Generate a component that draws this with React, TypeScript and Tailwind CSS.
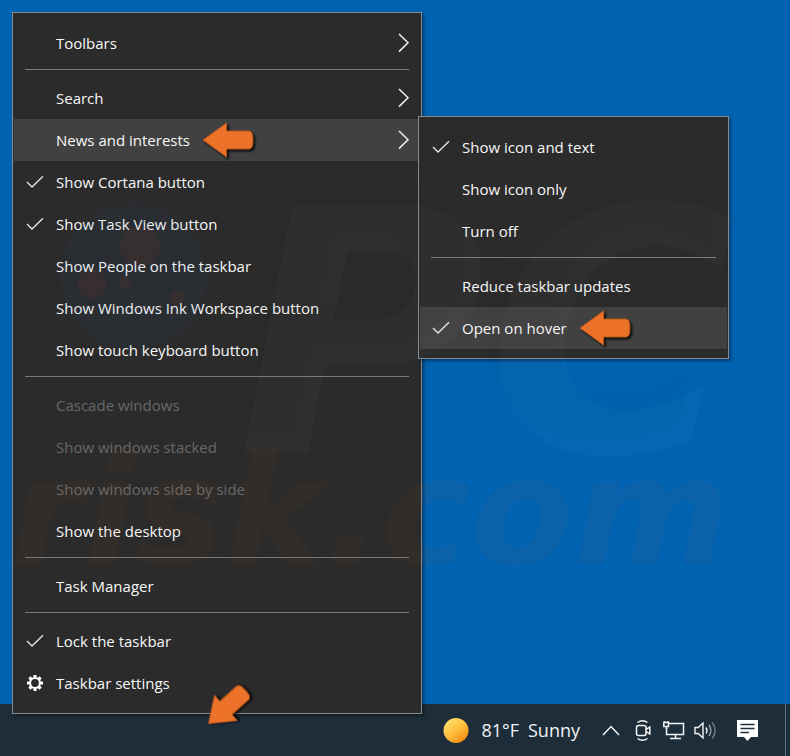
import React, { useState } from "react";

type Item = {
  id: string;
  label?: string;
  checked?: boolean;
  disabled?: boolean;
  gear?: boolean;
  more?: boolean;
  arrow?: boolean;
};

// An entry without a label is drawn as a separator
const taskbarItems: Item[] = [
  { id: "toolbars", label: "Toolbars", more: true },
  { id: "sep-1" },
  { id: "search", label: "Search", more: true },
  { id: "news", label: "News and interests", more: true, arrow: true },
  { id: "cortana", label: "Show Cortana button", checked: true },
  { id: "taskview", label: "Show Task View button", checked: true },
  { id: "people", label: "Show People on the taskbar" },
  { id: "ink", label: "Show Windows Ink Workspace button" },
  { id: "touch", label: "Show touch keyboard button" },
  { id: "sep-2" },
  { id: "cascade", label: "Cascade windows", disabled: true },
  { id: "stacked", label: "Show windows stacked", disabled: true },
  { id: "side", label: "Show windows side by side", disabled: true },
  { id: "desktop", label: "Show the desktop" },
  { id: "sep-3" },
  { id: "manager", label: "Task Manager" },
  { id: "sep-4" },
  { id: "lock", label: "Lock the taskbar", checked: true },
  { id: "settings", label: "Taskbar settings", gear: true },
];

const newsItems: Item[] = [
  { id: "icon-text", label: "Show icon and text", checked: true },
  { id: "icon-only", label: "Show icon only" },
  { id: "off", label: "Turn off" },
  { id: "sep" },
  { id: "updates", label: "Reduce taskbar updates" },
  { id: "hover", label: "Open on hover", checked: true, arrow: true },
];

const Check = () => (
  <svg width="18" height="14" viewBox="0 0 18 14" fill="none" aria-hidden="true">
    <path d="M1 7 6 12 17 1.2" stroke="#e8e8e8" strokeWidth="1.3" />
  </svg>
);

const Gear = () => (
  <svg width="18" height="18" viewBox="-9 -9 18 18" aria-hidden="true">
    <g fill="#fff">
      {[0, 45, 90, 135].map((deg) => (
        <rect key={deg} x="-1.6" y="-8" width="3.2" height="16" rx="0.4" transform={`rotate(${deg})`} />
      ))}
      <circle r="6" />
    </g>
    <circle r="3.9" fill="#2b2b2b" />
  </svg>
);

const Chevron = () => (
  <svg width="12" height="20" viewBox="0 0 12 20" fill="none" aria-hidden="true">
    <path d="M1 1 10 9.8 1 18.6" stroke="#f0f0f0" strokeWidth="1.5" />
  </svg>
);

const Arrow = ({ className = "" }: { className?: string }) => (
  <svg
    className={`shrink-0 drop-shadow-[2px_2px_1px_rgba(0,0,0,0.75)] ${className}`}
    width="52"
    height="36"
    viewBox="0 0 52 36"
    aria-hidden="true"
  >
    <path
      d="M1 18 24.5 1V9H47Q51 9 51 18T47 27H24.5V35Z"
      fill="#ec7229"
      stroke="#b9541b"
      strokeWidth="1"
      strokeLinejoin="round"
    />
  </svg>
);

const Menu = ({
  items,
  active,
  onActive,
  label,
  submenu,
  children,
  className,
}: {
  items: Item[];
  active: string;
  onActive: (id: string) => void;
  label: string;
  submenu?: React.ReactNode;
  children?: React.ReactNode;
  className: string;
}) => (
  <div
    className={`border border-[#858b90] bg-[#2b2b2b] py-[9px] shadow-[2px_2px_3px_rgba(0,0,0,0.4)] ${className}`}
  >
    <ul role="menu" aria-label={label}>
      {items.map((item) =>
        item.label ? (
          <li key={item.id} role="none" className="relative px-px">
            <button
              type="button"
              role={item.checked ? "menuitemcheckbox" : "menuitem"}
              aria-checked={item.checked}
              aria-haspopup={item.more ? "menu" : undefined}
              disabled={item.disabled}
              onMouseEnter={() => onActive(item.id)}
              className={`flex h-[42px] w-full items-center text-left ${
                item.disabled ? "text-[#686868]" : "text-[#f7f7f7]"
              } ${active === item.id ? "bg-[#414141]" : ""}`}
            >
              <span className="flex w-[42px] shrink-0 justify-center">
                {item.checked && <Check />}
                {item.gear && <Gear />}
              </span>
              <span className="whitespace-nowrap">{item.label}</span>
              {item.arrow && <Arrow className="ml-3" />}
              {item.more && (
                <span className="mr-[10px] ml-auto">
                  <Chevron />
                </span>
              )}
            </button>
            {item.id === "news" && submenu}
          </li>
        ) : (
          <li key={item.id} role="separator" className="mx-3 mt-[5px] mb-[7px] h-px bg-[#7a7a7a]" />
        )
      )}
    </ul>
    {children}
  </div>
);

const Watermark = () => (
  <div
    aria-hidden="true"
    className="pointer-events-none absolute inset-0 z-20 overflow-hidden font-['DejaVu_Sans',sans-serif] font-bold italic select-none"
  >
    <svg className="absolute top-[200px] left-[56px]" width="154" height="154" viewBox="0 0 154 154">
      <circle cx="77" cy="77" r="73" fill="#2a6ba8" opacity="0.06" />
      <g fill="#d03a1e" opacity="0.08">
        <circle cx="84" cy="46" r="20" />
        <circle cx="36" cy="84" r="14" />
        <circle cx="69" cy="82" r="6" />
        <circle cx="121" cy="98" r="7" />
      </g>
    </svg>
    <span className="absolute top-[116px] left-[225px] text-[340px] leading-[400px] whitespace-nowrap text-black/2 [text-shadow:12px_18px_0_rgba(255,255,255,0.02)]">
      PC
    </span>
    <span className="absolute top-[422px] left-[10px] text-[150px] leading-[180px] whitespace-nowrap text-[#e0641c]/5">
      risk.com
    </span>
  </div>
);

const TrayButton = ({ label, children }: { label: string; children: React.ReactNode }) => (
  <button type="button" aria-label={label} className="flex h-full items-center">
    {children}
  </button>
);

const Taskbar = () => (
  <footer className="flex h-[52px] items-center justify-end bg-[#1d2d39] text-[#f2f4f5]">
    <button type="button" className="flex h-full items-center text-lg">
      <svg width="26" height="26" viewBox="0 0 26 26" aria-hidden="true">
        <defs>
          <linearGradient id="sun" x1="0.2" y1="0.1" x2="0.8" y2="0.9">
            <stop offset="0" stopColor="#ffdc6a" />
            <stop offset="0.5" stopColor="#ffbf3c" />
            <stop offset="1" stopColor="#f98f12" />
          </linearGradient>
        </defs>
        <circle cx="13" cy="13.5" r="12.5" fill="url(#sun)" />
      </svg>
      <span className="ml-3">81°F</span>
      <span className="ml-[9px]">Sunny</span>
    </button>
    <div className="ml-[22px] flex h-full items-center">
      <TrayButton label="Show hidden icons">
        <svg width="18" height="12" viewBox="0 0 18 12" fill="none">
          <path d="M1 11 9 2.5 17 11" stroke="currentColor" strokeWidth="1.5" />
        </svg>
      </TrayButton>
      <span className="w-[15px]" />
      <TrayButton label="Meet Now">
        <svg width="17" height="22" viewBox="0 0 17 22" fill="none" stroke="currentColor" strokeWidth="1.5">
          <rect x="1.5" y="6.5" width="9.5" height="10" rx="2" />
          <path d="M11 10.3 14.8 8V15L11 12.7M2.5 3.5Q7.5.1 12.5 3.5M2.5 19.5Q7.5 22.9 12.5 19.5" />
        </svg>
      </TrayButton>
      <span className="w-[11px]" />
      <TrayButton label="Network">
        <svg width="22" height="20" viewBox="0 0 22 20" fill="none" stroke="currentColor" strokeWidth="1.5">
          <path d="M6 3.5H20.5V14.5H3.5V8M12.5 14.5V18.5M7 18.5H18" />
          <path d="M.8 2.5H5.5V6.5H.8ZM1.5 2.5V1M4.8 2.5V1M3.5 6.5V9" />
        </svg>
      </TrayButton>
      <span className="w-[9px]" />
      <TrayButton label="Volume">
        <svg width="24" height="20" viewBox="0 0 24 20" fill="none" stroke="currentColor" strokeWidth="1.4">
          <path d="M1 7.5H4.2L9 3V18L4.2 13.5H1Z" />
          <path d="M12 7.5Q14 10.5 12 13.5" />
          <path d="M15 5Q18.8 10.5 15 16" opacity="0.6" />
          <path d="M18.3 2.5Q24 10.5 18.3 18.5" opacity="0.4" />
        </svg>
      </TrayButton>
      <span className="w-[18px]" />
      <TrayButton label="Notifications">
        <svg width="23" height="22" viewBox="0 0 23 22">
          <path d="M1 1H22V18H15L11.5 22 8 18H1Z" fill="#fff" />
          <path d="M4.5 5.5H18.5M4.5 9.5H18.5M4.5 13.5H13" stroke="#1d2d39" strokeWidth="1.3" />
        </svg>
      </TrayButton>
      <button
        type="button"
        aria-label="Show desktop"
        className="ml-[26px] h-full w-[5px] border-l border-[#67737c]"
      />
    </div>
  </footer>
);

export default function App() {
  const [active, setActive] = useState("news");
  const [subActive, setSubActive] = useState("hover");

  return (
    <div className="relative flex min-h-screen flex-col overflow-hidden bg-[#0063b1] font-['Open_Sans','Noto_Sans',sans-serif] text-[15px]">
      <main className="flex-1 pt-3 pl-3">
        <Menu
          items={taskbarItems}
          active={active}
          onActive={setActive}
          label="Taskbar"
          className="relative z-10 -mb-[10px] w-[410px]"
          submenu={
            <Menu
              items={newsItems}
              active={subActive}
              onActive={setSubActive}
              label="News and interests"
              className="absolute -top-[3px] left-full -ml-[3px] w-[311px]"
            />
          }
        >
          {/* Points at the empty part of the taskbar, below the menu */}
          <Arrow className="absolute -bottom-[12px] left-[188px] -rotate-[42deg]" />
        </Menu>
      </main>
      <Taskbar />
      <Watermark />
    </div>
  );
}
